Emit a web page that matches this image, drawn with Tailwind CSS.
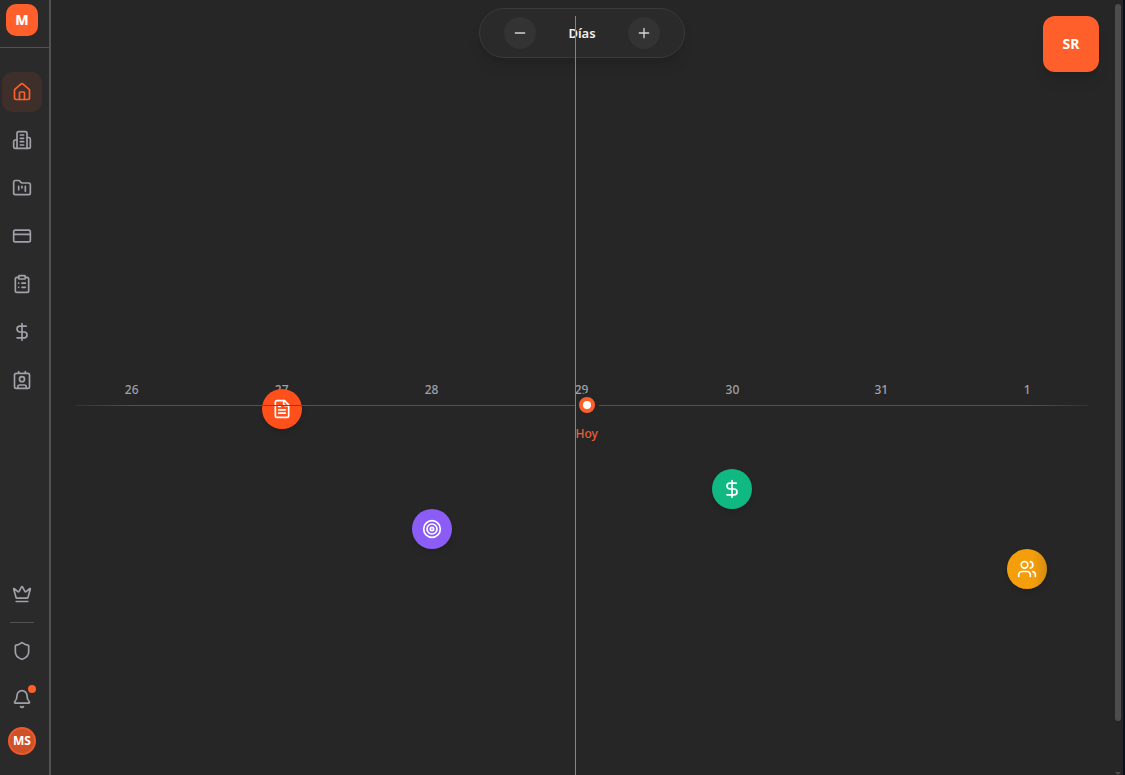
<!DOCTYPE html>
<html lang="es">
<head>
<meta charset="utf-8">
<meta name="viewport" content="width=device-width, initial-scale=1">
<title>Inicio</title>
<script src="https://cdn.jsdelivr.net/npm/@tailwindcss/browser@4"></script>
</head>
<body class="flex h-screen overflow-hidden bg-[#0b1020] pr-[2px] font-['Noto_Sans','Open_Sans',sans-serif] text-white">

<!-- Shared icon shapes -->
<svg class="hidden" aria-hidden="true">
  <symbol id="dollar" viewBox="0 0 24 24"><path d="M12 2v20"/><path d="M17 5H9.5a3.5 3.5 0 0 0 0 7h5a3.5 3.5 0 0 1 0 7H6"/></symbol>
</svg>

<aside class="flex w-[51px] shrink-0 flex-col border-r-2 border-[#525252] bg-[#2a2a2a]">
  <div class="border-b border-[#525252] pt-1 pb-[11px] pl-[6px]">
    <a href="#" class="flex size-8 items-center justify-center rounded-[10px] bg-[#ff5f2b] text-[14px] leading-4 font-extrabold">M</a>
  </div>
  <nav class="mt-6 flex w-11 flex-col items-center gap-2 text-[#a1a1aa]" aria-label="Principal">
    <a href="#" aria-label="Inicio" aria-current="page" class="flex size-10 items-center justify-center rounded-[10px] bg-[#3f2f2a] text-[#ff5f2b]">
      <svg class="size-5" viewBox="0 0 24 24" fill="none" stroke="currentColor" stroke-width="2" stroke-linecap="round" stroke-linejoin="round"><path d="M15 21v-8a1 1 0 0 0-1-1h-4a1 1 0 0 0-1 1v8"/><path d="M3 10a2 2 0 0 1 .709-1.528l7-5.999a2 2 0 0 1 2.582 0l7 5.999A2 2 0 0 1 21 10v9a2 2 0 0 1-2 2H5a2 2 0 0 1-2-2z"/></svg>
    </a>
    <a href="#" aria-label="Empresas" class="flex size-10 items-center justify-center">
      <svg class="size-5" viewBox="0 0 24 24" fill="none" stroke="currentColor" stroke-width="2" stroke-linecap="round" stroke-linejoin="round"><path d="M6 22V4a2 2 0 0 1 2-2h8a2 2 0 0 1 2 2v18Z"/><path d="M6 12H4a2 2 0 0 0-2 2v6a2 2 0 0 0 2 2h2"/><path d="M18 9h2a2 2 0 0 1 2 2v9a2 2 0 0 1-2 2h-2"/><path d="M10 6h4M10 10h4M10 14h4M10 18h4"/></svg>
    </a>
    <a href="#" aria-label="Proyectos" class="flex size-10 items-center justify-center">
      <svg class="size-5" viewBox="0 0 24 24" fill="none" stroke="currentColor" stroke-width="2" stroke-linecap="round" stroke-linejoin="round"><path d="M4 20h16a2 2 0 0 0 2-2V8a2 2 0 0 0-2-2h-7.93a2 2 0 0 1-1.66-.9l-.82-1.2A2 2 0 0 0 7.93 3H4a2 2 0 0 0-2 2v13c0 1.1.9 2 2 2Z"/><path d="M8 10v4M12 10v2M16 10v6"/></svg>
    </a>
    <a href="#" aria-label="Pagos" class="flex size-10 items-center justify-center">
      <svg class="size-5" viewBox="0 0 24 24" fill="none" stroke="currentColor" stroke-width="2" stroke-linecap="round" stroke-linejoin="round"><rect width="20" height="14" x="2" y="5" rx="2"/><path d="M2 10h20"/></svg>
    </a>
    <a href="#" aria-label="Tareas" class="flex size-10 items-center justify-center">
      <svg class="size-5" viewBox="0 0 24 24" fill="none" stroke="currentColor" stroke-width="2" stroke-linecap="round" stroke-linejoin="round"><rect width="8" height="4" x="8" y="2" rx="1"/><path d="M16 4h2a2 2 0 0 1 2 2v14a2 2 0 0 1-2 2H6a2 2 0 0 1-2-2V6a2 2 0 0 1 2-2h2"/><path d="M12 11h4M12 16h4M8 11h.01M8 16h.01"/></svg>
    </a>
    <a href="#" aria-label="Finanzas" class="flex size-10 items-center justify-center">
      <svg class="size-5" fill="none" stroke="currentColor" stroke-width="2" stroke-linecap="round" stroke-linejoin="round"><use href="#dollar"/></svg>
    </a>
    <a href="#" aria-label="Contactos" class="flex size-10 items-center justify-center">
      <svg class="size-5" viewBox="0 0 24 24" fill="none" stroke="currentColor" stroke-width="2" stroke-linecap="round" stroke-linejoin="round"><path d="M16 2v2M8 2v2"/><path d="M7 22v-2a2 2 0 0 1 2-2h6a2 2 0 0 1 2 2v2"/><circle cx="12" cy="11" r="3"/><rect x="3" y="4" width="18" height="18" rx="2"/></svg>
    </a>
  </nav>
  <div class="mt-auto flex w-11 flex-col items-center gap-2 pb-5 text-[#a1a1aa]">
    <a href="#" aria-label="Planes" class="flex size-10 items-center justify-center">
      <svg class="size-5" viewBox="0 0 24 24" fill="none" stroke="currentColor" stroke-width="2" stroke-linecap="round" stroke-linejoin="round"><path d="M11.562 3.266a.5.5 0 0 1 .876 0L15.39 8.87a1 1 0 0 0 1.516.294L21.183 5.5a.5.5 0 0 1 .798.519l-2.834 10.246a1 1 0 0 1-.956.734H5.81a1 1 0 0 1-.957-.734L2.02 6.02a.5.5 0 0 1 .798-.519l4.276 3.664a1 1 0 0 0 1.516-.294z"/><path d="M5 21h14"/></svg>
    </a>
    <hr class="w-6 border-[#525252]">
    <a href="#" aria-label="Seguridad" class="flex size-10 items-center justify-center">
      <svg class="size-5" viewBox="0 0 24 24" fill="none" stroke="currentColor" stroke-width="2" stroke-linecap="round" stroke-linejoin="round"><path d="M20 13c0 5-3.5 7.5-7.66 8.95a1 1 0 0 1-.67-.01C7.5 20.5 4 18 4 13V6a1 1 0 0 1 1-1c2 0 4.5-1.2 6.24-2.72a1.17 1.17 0 0 1 1.52 0C14.51 3.81 17 5 19 5a1 1 0 0 1 1 1z"/></svg>
    </a>
    <button type="button" aria-label="Notificaciones" class="relative flex size-10 items-center justify-center">
      <svg class="size-5" viewBox="0 0 24 24" fill="none" stroke="currentColor" stroke-width="2" stroke-linecap="round" stroke-linejoin="round"><path d="M10.268 21a2 2 0 0 0 3.464 0"/><path d="M3.262 15.326A1 1 0 0 0 4 17h16a1 1 0 0 0 .74-1.673C19.41 13.956 18 12.499 18 8A6 6 0 0 0 6 8c0 4.499-1.411 5.956-2.738 7.326"/></svg>
      <span class="absolute top-[6px] right-[6px] size-2 rounded-full bg-[#ff5f2b]"></span>
    </button>
    <button type="button" class="flex size-7 items-center justify-center rounded-full border-2 border-[#eb5a2c] bg-[#cf5128] text-[12px] leading-4 font-bold text-white">MS</button>
  </div>
</aside>

<main class="relative min-w-0 flex-1 bg-[#262626]">
  <!-- Zoom control -->
  <header class="flex justify-center pt-2 pr-[10px]">
    <div class="flex h-[50px] w-[206px] items-center justify-between rounded-full border border-[#3a3a3a] bg-[#2a2a2a] px-6 shadow-lg">
      <button type="button" aria-label="Alejar" class="flex size-8 items-center justify-center rounded-full bg-[#333333] text-[#d4d4d4]">
        <svg class="size-4" viewBox="0 0 24 24" fill="none" stroke="currentColor" stroke-width="2" stroke-linecap="round"><path d="M5 12h14"/></svg>
      </button>
      <span class="text-[13px] leading-5 font-semibold text-[#f0f0f0]">Días</span>
      <button type="button" aria-label="Acercar" class="flex size-8 items-center justify-center rounded-full bg-[#333333] text-[#d4d4d4]">
        <svg class="size-4" viewBox="0 0 24 24" fill="none" stroke="currentColor" stroke-width="2" stroke-linecap="round"><path d="M5 12h14M12 5v14"/></svg>
      </button>
    </div>
  </header>
  <button type="button" class="absolute top-4 right-6 flex size-14 items-center justify-center rounded-xl bg-[#ff5f2b] text-[14px] leading-4 font-bold shadow-lg">SR</button>

  <!-- Timeline canvas -->
  <section aria-label="Línea de tiempo" class="absolute inset-x-6 top-[405px] mr-[11px] text-[12px] leading-4 font-medium">
    <time class="absolute -top-[23px] left-[5.6%] -translate-x-1/2 text-[#a1a1aa]">26</time>
    <time class="absolute -top-[23px] left-[20.4%] -translate-x-1/2 text-[#a1a1aa]">27</time>
    <time class="absolute -top-[23px] left-[35.2%] -translate-x-1/2 text-[#a1a1aa]">28</time>
    <time class="absolute -top-[23px] left-[50%] -translate-x-1/2 text-[#a1a1aa]">29</time>
    <time class="absolute -top-[23px] left-[64.9%] -translate-x-1/2 text-[#a1a1aa]">30</time>
    <time class="absolute -top-[23px] left-[79.6%] -translate-x-1/2 text-[#a1a1aa]">31</time>
    <time class="absolute -top-[23px] left-[94%] -translate-x-1/2 text-[#a1a1aa]">1</time>

    <button type="button" aria-label="Documento" class="absolute -top-4 left-[20.4%] flex size-10 -translate-x-1/2 items-center justify-center rounded-full bg-[#ff4f1a] shadow-md">
      <svg class="size-5" viewBox="0 0 24 24" fill="none" stroke="currentColor" stroke-width="2" stroke-linecap="round" stroke-linejoin="round"><path d="M15 2H6a2 2 0 0 0-2 2v16a2 2 0 0 0 2 2h12a2 2 0 0 0 2-2V7Z"/><path d="M14 2v4a2 2 0 0 0 2 2h4"/><path d="M10 9H8M16 13H8M16 17H8"/></svg>
    </button>
    <button type="button" aria-label="Objetivo" class="absolute top-[104px] left-[35.2%] flex size-10 -translate-x-1/2 items-center justify-center rounded-full bg-[#8b5cf6] shadow-md">
      <svg class="size-5" viewBox="0 0 24 24" fill="none" stroke="currentColor" stroke-width="2"><circle cx="12" cy="12" r="10"/><circle cx="12" cy="12" r="6"/><circle cx="12" cy="12" r="2"/></svg>
    </button>
    <button type="button" aria-label="Pago" class="absolute top-16 left-[64.9%] flex size-10 -translate-x-1/2 items-center justify-center rounded-full bg-[#10b981] shadow-md">
      <svg class="size-5" fill="none" stroke="currentColor" stroke-width="2" stroke-linecap="round" stroke-linejoin="round"><use href="#dollar"/></svg>
    </button>
    <button type="button" aria-label="Reunión" class="absolute top-36 left-[94%] flex size-10 -translate-x-1/2 items-center justify-center rounded-full bg-linear-to-r from-[#f59e0b] from-65% to-[#d58b12] shadow-md">
      <svg class="size-5" viewBox="0 0 24 24" fill="none" stroke="currentColor" stroke-width="2" stroke-linecap="round" stroke-linejoin="round"><path d="M16 21v-2a4 4 0 0 0-4-4H6a4 4 0 0 0-4 4v2"/><circle cx="9" cy="7" r="4"/><path d="M22 21v-2a4 4 0 0 0-3-3.87"/><path d="M16 3.13a4 4 0 0 1 0 7.75"/></svg>
    </button>

    <div class="absolute inset-x-0 top-0 flex h-px">
      <div class="w-[6%] bg-linear-to-r from-[#333333] to-[#525252]"></div>
      <div class="flex-1 bg-[#525252]"></div>
      <div class="w-[6%] bg-linear-to-l from-[#333333] to-[#525252]"></div>
    </div>
    <div class="absolute -top-3 left-1/2 ml-[5px] flex size-6 -translate-x-1/2 items-center justify-center rounded-full bg-[#262626]">
      <span class="size-4 rounded-full border-4 border-[#ff5f2b] bg-white"></span>
    </div>
    <span class="absolute top-[21px] left-1/2 -ml-[6px] text-[#e8603a]">Hoy</span>
  </section>

  <!-- Current-day marker -->
  <div class="absolute top-4 bottom-0 left-1/2 -ml-3 w-px bg-[#e8603a]"></div>

  <!-- Scroll track -->
  <div class="absolute inset-y-0 right-[2px] flex w-[6px] flex-col items-center justify-between pt-1" aria-hidden="true">
    <div class="h-[93%] w-full rounded-full bg-[#4d4d4d]"></div>
    <svg class="h-[3px] w-[6px]" viewBox="0 0 6 3" fill="#4d4d4d"><path d="M0 0h6L3 3z"/></svg>
  </div>
</main>
</body>
</html>
